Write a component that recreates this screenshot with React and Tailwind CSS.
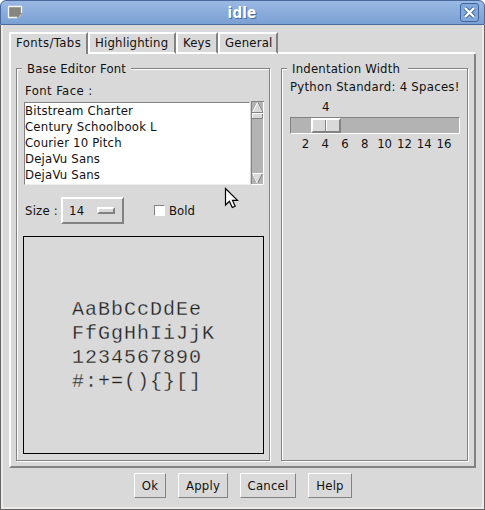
const ui = "font-['DejaVu_Sans_Condensed','DejaVu_Sans',sans-serif] [font-stretch:condensed]";

function Label({ children, className = "" }) {
  return <span className={"block h-4 shrink-0 whitespace-nowrap " + className}>{children}</span>;
}

function Tab({ label, className = "", active = false }) {
  return (
    <div className={"h-[22px] border-t-2 border-l-2 border-r-2 border-t-white border-l-white border-r-[#828282] pt-[1px] pl-[5px] " + className + (active ? " border-b-0" : " border-b-2 border-b-white")}>
      <Label>{label}</Label>
    </div>
  );
}

function Group({ title, gapClass, className = "", children }) {
  return (
    <fieldset className={"relative h-[393px] border border-[#828282] shadow-[1px_1px_0_#fff,inset_1px_1px_0_#fff] " + className}>
      <div className={"absolute -top-[8px] left-[5px] h-[18px] bg-[#d9d9d9] pl-[5px] " + gapClass}>
        <Label>{title}</Label>
      </div>
      {children}
    </fieldset>
  );
}

function Button({ label, className }) {
  return (
    <button className={"flex h-[25px] justify-center border border-t-white border-l-white border-r-[#828282] border-b-[#828282] pt-[4px] " + className}>
      <Label>{label}</Label>
    </button>
  );
}

const faces = ["Bitstream Charter", "Century Schoolbook L", "Courier 10 Pitch", "DejaVu Sans", "DejaVu Sans"];
const ticks = ["2", "4", "6", "8", "10", "12", "14", "16"];
const sample = ["AaBbCcDdEe", "FfGgHhIiJjK", "1234567890", "#:+=(){}[]"];

export default function App() {
  return (
    <div className={"relative flex h-[510px] w-[485px] flex-col overflow-hidden bg-white text-[13px] leading-4 tracking-[0.2px] text-[#111] " + ui}>
      <header className="flex h-[25px] shrink-0 items-center justify-between rounded-t-[6px] border border-[#486a9c] bg-linear-to-b from-[#9ab8e4] to-[#7aa0d3] pr-[5px] pl-[6px]">
        <svg width="17" height="15" className="block">
          <path d="M1.500 1.500h13v7.500l-3.500 3.500h-9.500z" fill="#86867f" stroke="#f4f4f0" strokeWidth="1.300" />
          <path d="M10.500 13l1-4 3.500-.5z" fill="#a5a59c" stroke="#77776f" strokeWidth=".7" />
        </svg>
        <h1 className="text-[15px] font-bold text-white [text-shadow:1px_1px_0_#46699b]">idle</h1>
        <svg width="19" height="20" className="block">
          <rect x=".5" y=".5" width="18" height="18" rx="2.5" fill="#83a8dc" stroke="#3f669c" />
          <path d="M5 5l9 9m0-9l-9 9" stroke="#3f669c" strokeWidth="4.200" />
          <path d="M5 5l9 9m0-9l-9 9" stroke="#fff" strokeWidth="2.400" />
        </svg>
      </header>
      <main className="flex flex-1 flex-col border-x border-b border-[#666] bg-[#d9d9d9] pt-[7px]">
        <div className="flex pl-[8px]">
          <Tab active label="Fonts/Tabs" className="w-[79px] tracking-[0.4px]" />
          <Tab label="Highlighting" className="w-[88px]" />
          <Tab label="Keys" className="w-[42px]" />
          <Tab label="General" className="w-[60px]" />
          <div className="mr-[9px] flex-1 border-b-2 border-white" />
        </div>
        <section className="ml-[8px] flex h-[414px] w-[467px] gap-[11px] border-r-2 border-b-2 border-l-2 border-r-[#828282] border-b-[#828282] border-l-white pt-[14px] pl-[5px]">
          <Group title="Base Editor Font" gapClass="w-[109px]" className="w-[254px]">
            <div className="pt-[14px] pl-[8px] tracking-[0.4px]"><Label>Font Face :</Label></div>
            <div className="mt-[2px] ml-[7px] flex items-center gap-[1px]">
              <div className="h-[83px] w-[226px] border border-t-[#828282] border-r-white border-b-[#eee] border-l-[#828282] bg-white">
                {faces.map((f, i) => <Label key={i}>{f}</Label>)}
              </div>
              <svg width="13" height="84" className="block">
                <path d="M0 0h13v84H0z" fill="#b3b3b3" />
                <path d="M.5 84V.5H13" stroke="#828282" fill="none" />
                <path d="M12.500 1v82.500H0" stroke="#fff" fill="none" />
                <path d="M6.500 1.500L1.500 11.500h10z" fill="#d9d9d9" stroke="#fff" />
                <path d="M1 11.500h11l-5-10" fill="none" stroke="#828282" />
                <path d="M1 12h11v6H1z" fill="#d9d9d9" />
                <path d="M1.500 18v-5.500H12" stroke="#fff" fill="none" />
                <path d="M1 17.500h10.500V13" stroke="#828282" fill="none" />
                <path d="M1.500 72.500h10l-5 10z" fill="#d9d9d9" stroke="#828282" />
                <path d="M12 72.500H1.500l5 10" fill="none" stroke="#fff" />
              </svg>
            </div>
            <div className="mt-[12px] flex h-[27px] items-start pl-[8px]">
              <Label className="mt-[6px] w-[31px]">Size :</Label>
              <button className="ml-[5px] flex h-[27px] w-[63px] border-2 border-t-white border-r-[#828282] border-b-[#828282] border-l-white pt-[4px] pl-[6px]">
                <Label className="w-[15px]">14</Label>
                <span className="mt-[4px] ml-[13px] h-[7px] w-[18px] border-2 border-t-white border-r-[#828282] border-b-[#828282] border-l-white" />
              </button>
              <span className="mt-[8px] ml-[30px] h-[11px] w-[11px] border border-t-[#828282] border-r-white border-b-white border-l-[#828282] bg-white" />
              <Label className="mt-[6px] ml-[4px] tracking-normal">Bold</Label>
            </div>
            <pre className="mt-[12px] ml-[6px] h-[218px] w-[241px] border border-black pt-[61px] pl-[48px] font-['Liberation_Mono',monospace] text-[20px] leading-6 tracking-[1px] text-[#222] [-webkit-text-stroke:0.3px_#d9d9d9] [font-stretch:normal]">
              {sample.map((s) => <span key={s} className="block">{s}</span>)}
            </pre>
          </Group>
          <Group title="Indentation Width" gapClass="w-[121px]" className="w-[187px]">
            <div className="pt-[10px] pl-[8px] tracking-[0.27px]"><Label>Python Standard: 4 Spaces!</Label></div>
            <div className="mt-[4px] pl-[40px]"><Label>4</Label></div>
            <div className="mt-[2px] ml-[8px] flex h-[17px] w-[170px] border border-t-[#828282] border-r-white border-b-white border-l-[#828282] bg-[#b3b3b3] pl-[20px]">
              <div className="flex h-[15px] w-[30px] border-2 border-t-white border-r-[#828282] border-b-[#828282] border-l-white bg-[#d9d9d9]">
                <div className="w-[13px] border-r border-[#828282]" />
                <div className="w-px bg-white" />
              </div>
            </div>
            <div className="mt-[2px] flex pl-[13.5px] tracking-normal">
              {ticks.map((t) => <Label key={t} className="w-[19.8px] text-center">{t}</Label>)}
            </div>
          </Group>
        </section>
        <footer className="mt-[5px] flex gap-[12px] pl-[133px]">
          <Button label="Ok" className="w-[32px]" />
          <Button label="Apply" className="w-[50px]" />
          <Button label="Cancel" className="w-[56px]" />
          <Button label="Help" className="w-[44px]" />
        </footer>
      </main>
      <div className="pointer-events-none absolute inset-x-[1px] top-[25px] bottom-[1px] border-2 border-t-0 border-[#edeae7]" />
      <svg width="15" height="23" className="absolute top-[187px] left-[224px]">
        <path d="M1.500 1.500v16.500l3.900-3.700 2.900 6.200 2.900-1.300-2.700-5.800h5z" fill="#fff" stroke="#000" strokeWidth="1.200" />
      </svg>
    </div>
  );
}
